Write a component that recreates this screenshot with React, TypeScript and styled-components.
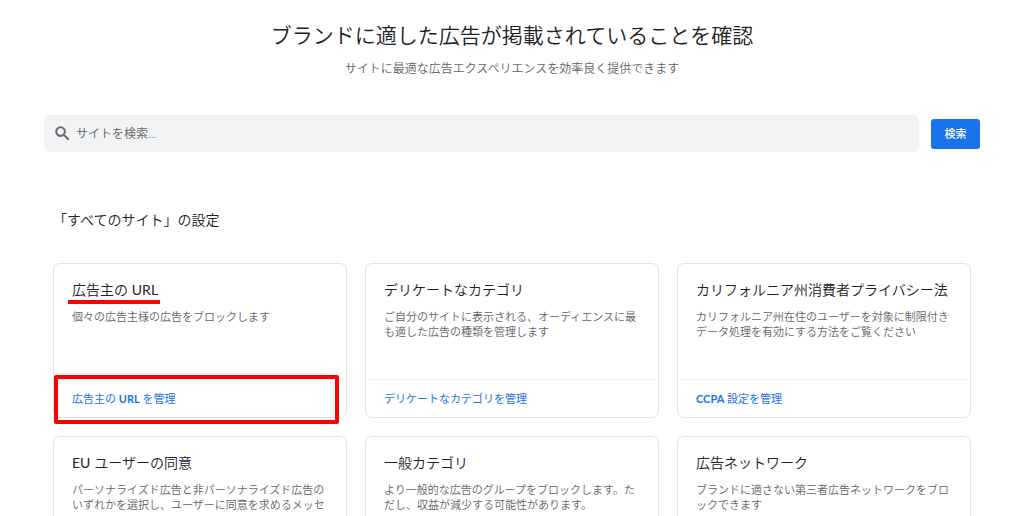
import React from 'react';
import styled, { createGlobalStyle } from 'styled-components';

const GlobalStyle = createGlobalStyle`
  * { box-sizing: border-box; }
  body {
    margin: 0;
    background: #fff;
    color: #202124;
    font-family: Lato, "Noto Sans CJK JP", sans-serif;
    font-weight: 350;
  }
`;

const Page = styled.main`
  padding: 19px 44px 0;
`;

const Header = styled.header`
  text-align: center;
`;

const Title = styled.h1`
  margin: 0;
  font-size: 21px;
  line-height: 32px;
  font-weight: 350;
`;

const Lead = styled.p`
  margin: 9px 0 0;
  font-size: 12px;
  line-height: 18px;
  color: #5f6368;
`;

const SearchForm = styled.form`
  display: flex;
  align-items: center;
  gap: 12px;
  margin-top: 37px;
`;

const SearchField = styled.label`
  display: flex;
  flex: 1;
  align-items: center;
  gap: 4px;
  height: 37px;
  padding: 0 9px;
  border-radius: 6px;
  background: #f1f3f4;
  color: #5f6368;
`;

const SearchInput = styled.input`
  flex: 1;
  padding: 0;
  border: 0;
  outline: 0;
  background: transparent;
  font: inherit;
  font-size: 12px;
  line-height: 18px;
  color: #202124;
  &::placeholder { color: #5f6368; opacity: 1; }
`;

const SearchButton = styled.button`
  width: 49px;
  height: 30px;
  padding: 0 0 2px;
  border: 0;
  border-radius: 3px;
  background: #1a73e8;
  color: #fff;
  font: inherit;
  font-size: 11px;
  font-weight: 500;
`;

const SectionTitle = styled.h2`
  margin: 58px 9px 0;
  font-size: 14px;
  line-height: 20px;
  font-weight: 350;
`;

const Grid = styled.div`
  display: grid;
  grid-template-columns: repeat(3, 1fr);
  gap: 18px;
  margin: 33px 9px 0;
`;

const Card = styled.article`
  display: flex;
  flex-direction: column;
  min-height: 155px;
  border: 1px solid #e2e4e6;
  border-radius: 7px;
`;

const CardBody = styled.div`
  flex: 1;
  padding: 16px 18px 0;
`;

const CardTitle = styled.h3`
  position: relative;
  width: fit-content;
  margin: 0;
  font-size: 14px;
  line-height: 20px;
  font-weight: 350;
  white-space: nowrap;
`;

const CardText = styled.p`
  margin: 9px 0 0;
  font-size: 11px;
  line-height: 15px;
  color: #5f6368;
`;

const CardFooter = styled.footer`
  position: relative;
  height: 38px;
  padding: 0 18px;
  border-top: 1px solid #f1f3f4;
`;

const CardLink = styled.a`
  display: block;
  font-size: 11px;
  line-height: 37px;
  font-weight: 400;
  color: #1a73e8;
  text-decoration: none;
`;

const Latin = styled.span<{ $weight: number }>`
  font-weight: ${(p) => p.$weight};
`;

const Underline = styled.span`
  position: absolute;
  left: -4px;
  right: -2px;
  bottom: -4px;
  height: 4px;
  background: #f00;
`;

const Frame = styled.span`
  position: absolute;
  inset: -5px 7px -7px 0;
  border: 4px solid #f00;
  border-radius: 2px;
  pointer-events: none;
`;

type Setting = { title: string; text: string[]; link: string; marked?: boolean };

const settings: Setting[] = [
  { title: '広告主の URL', text: ['個々の広告主様の広告をブロックします'], link: '広告主の URL を管理', marked: true },
  { title: 'デリケートなカテゴリ', text: ['ご自分のサイトに表示される、オーディエンスに最', 'も適した広告の種類を管理します'], link: 'デリケートなカテゴリを管理' },
  { title: 'カリフォルニア州消費者プライバシー法', text: ['カリフォルニア州在住のユーザーを対象に制限付き', 'データ処理を有効にする方法をご覧ください'], link: 'CCPA 設定を管理' },
  { title: 'EU ユーザーの同意', text: ['パーソナライズド広告と非パーソナライズド広告の', 'いずれかを選択し、ユーザーに同意を求めるメッセ'], link: 'EU ユーザーの同意を管理' },
  { title: '一般カテゴリ', text: ['より一般的な広告のグループをブロックします。た', 'だし、収益が減少する可能性があります。'], link: '一般カテゴリを管理' },
  { title: '広告ネットワーク', text: ['ブランドに適さない第三者広告ネットワークをブロ', 'ックできます'], link: '広告ネットワークを管理' },
];

/* Latin words are set heavier than the Japanese around them. */
function Mixed({ text, weight }: { text: string; weight: number }) {
  return (
    <>
      {text.split(/([A-Z]+)/).map((part, i) =>
        i % 2 === 1 ? <Latin key={i} $weight={weight}>{part}</Latin> : part,
      )}
    </>
  );
}

export default function App() {
  return (
    <Page lang="ja">
      <GlobalStyle />
      <Header>
        <Title>ブランドに適した広告が掲載されていることを確認</Title>
        <Lead>サイトに最適な広告エクスペリエンスを効率良く提供できます</Lead>
      </Header>
      <SearchForm onSubmit={(e) => e.preventDefault()}>
        <SearchField>
          <svg width="19" height="19" viewBox="0 0 24 24" fill="currentColor" stroke="currentColor" strokeWidth="0.4" aria-hidden="true">
            <path d="M15.5 14h-.79l-.28-.27A6.47 6.47 0 0 0 16 9.5 6.5 6.5 0 1 0 9.5 16c1.61 0 3.09-.59 4.23-1.57l.27.28v.79l5 4.99L20.49 19l-4.99-5zm-6 0C7.01 14 5 11.99 5 9.5S7.01 5 9.5 5 14 7.01 14 9.5 11.99 14 9.5 14z" />
          </svg>
          <SearchInput type="text" aria-label="サイトを検索" placeholder="サイトを検索..." />
        </SearchField>
        <SearchButton type="submit">検索</SearchButton>
      </SearchForm>
      <SectionTitle>「すべてのサイト」の設定</SectionTitle>
      <Grid>
        {settings.map((s) => (
          <Card key={s.title}>
            <CardBody>
              <CardTitle>
                <Mixed text={s.title} weight={400} />
                {s.marked && <Underline />}
              </CardTitle>
              <CardText>
                {s.text.map((line, i) => (
                  <React.Fragment key={line}>
                    {i > 0 && <br />}
                    {line}
                  </React.Fragment>
                ))}
              </CardText>
            </CardBody>
            <CardFooter>
              <CardLink href="#">
                <Mixed text={s.link} weight={700} />
              </CardLink>
              {s.marked && <Frame />}
            </CardFooter>
          </Card>
        ))}
      </Grid>
    </Page>
  );
}
